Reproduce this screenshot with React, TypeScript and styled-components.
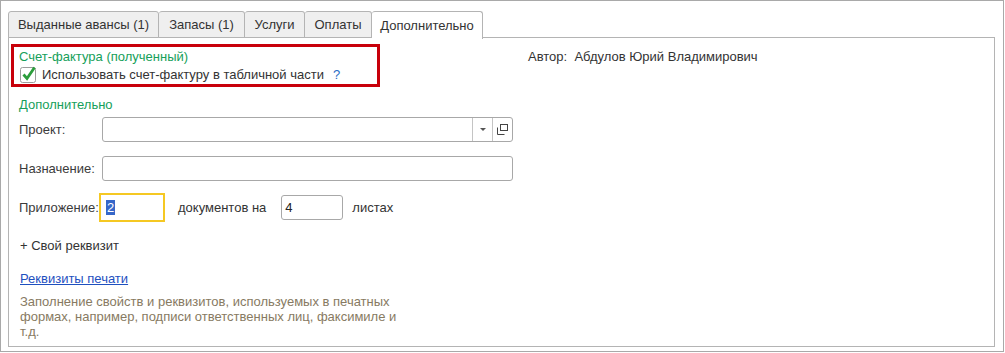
import React from "react";
import styled, { createGlobalStyle } from "styled-components";

const Global = createGlobalStyle`
  html, body { margin: 0; padding: 0; background: #fff; }
  body { font-family: Arial, "Liberation Sans", sans-serif; font-size: 13px; color: #3b3b3b; }
  * { box-sizing: border-box; }
`;

const Frame = styled.div`
  width: 1004px;
  height: 352px;
  border: 1px solid #a9a9a9;
  padding: 10px 8px 4px 7px;
  display: flex;
  flex-direction: column;
`;

const TabBar = styled.div`
  display: flex;
  height: 27px;
  position: relative;
  z-index: 1;
`;

const Tab = styled.div<{ $active?: boolean; $w: number; $first?: boolean }>`
  width: ${(p) => p.$w}px;
  height: ${(p) => (p.$active ? 28 : 27)}px;
  border: 1px solid #b4b4b4;
  border-left-width: ${(p) => (p.$first ? 1 : 0)}px;
  border-bottom: ${(p) => (p.$active ? "none" : "1px solid #b4b4b4")};
  border-radius: 3px 3px 0 0;
  background: ${(p) => (p.$active ? "#fff" : "#efefef")};
  display: flex;
  align-items: center;
  justify-content: center;
  color: #333;
  font-size: 13px;
  white-space: nowrap;
`;

const Panel = styled.div`
  flex: 1;
  border: 1px solid #b4b4b4;
  margin-top: -1px;
  display: flex;
  padding: 6px 0 0 2px;
`;

const LeftCol = styled.div`
  width: 504px;
  display: flex;
  flex-direction: column;
`;

const RightCol = styled.div`
  padding-left: 13px;
  padding-top: 5px;
  line-height: 16px;
  color: #333;
`;

const RedBox = styled.div`
  width: 369px;
  height: 43px;
  border: 3px solid #c8000a;
  padding: 2px 0 0 5px;
`;

const GroupTitle = styled.div<{ $mt?: number; $pl?: number }>`
  color: #16a05a;
  line-height: 16px;
  margin-top: ${(p) => p.$mt ?? 0}px;
  padding-left: ${(p) => p.$pl ?? 0}px;
  font-size: 13px;
`;

const CheckRow = styled.div`
  display: flex;
  align-items: center;
  height: 18px;
  gap: 5px;
  padding-left: 1px;
`;

const CheckText = styled.span`
  color: #333;
`;

const Help = styled.span`
  color: #2b6dc5;
  margin-left: 4px;
`;

const Row = styled.div<{ $mt: number; $h: number }>`
  display: flex;
  align-items: center;
  height: ${(p) => p.$h}px;
  margin-top: ${(p) => p.$mt}px;
  padding-left: 8px;
`;

const Label = styled.div<{ $w: number }>`
  width: ${(p) => p.$w}px;
  color: #3b3b3b;
  white-space: nowrap;
`;

const Field = styled.div<{ $w: number; $h: number; $ml?: number }>`
  width: ${(p) => p.$w}px;
  height: ${(p) => p.$h}px;
  margin-left: ${(p) => p.$ml ?? 0}px;
  border: 1px solid #a8a8a8;
  border-radius: 3px;
  background: #fff;
  display: flex;
  align-items: stretch;
`;

const FieldText = styled.div`
  flex: 1;
  display: flex;
  align-items: center;
  padding-left: 3px;
  color: #222;
`;

const FieldBtn = styled.div`
  width: 20px;
  border-left: 1px solid #c4c4c4;
  display: flex;
  align-items: center;
  justify-content: center;
`;

const FocusField = styled.div`
  width: 66px;
  height: 29px;
  border: 2px solid #f5c823;
  display: flex;
  align-items: center;
  padding-left: 5px;
`;

const Selected = styled.span`
  background: #3667c9;
  color: #fff;
  line-height: 15px;
  padding: 0 1px;
`;

const Inline = styled.span<{ $ml: number }>`
  margin-left: ${(p) => p.$ml}px;
  color: #333;
  white-space: nowrap;
`;

const PlainLine = styled.div<{ $mt: number }>`
  margin-top: ${(p) => p.$mt}px;
  padding-left: 9px;
  line-height: 16px;
  color: #333;
`;

const Link = styled.a`
  display: block;
  margin-top: 17px;
  margin-left: 9px;
  line-height: 16px;
  color: #1e50bf;
  text-decoration: underline;
  width: fit-content;
`;

const Desc = styled.div`
  margin-top: 7px;
  padding-left: 9px;
  width: 396px;
  color: #877a62;
  font-size: 13px;
  line-height: 15.2px;
`;

const CheckBox = () => (
  <svg width="17" height="17" viewBox="0 0 17 17">
    <rect x="0.5" y="1.5" width="15" height="15" rx="2" fill="#fff" stroke="#9c9c9c" />
    <path d="M3.5 8.5 L7 12.5 L14.5 1.5" fill="none" stroke="#2c9d3c" strokeWidth="2.8" />
  </svg>
);

const tabs = [
  { t: "Выданные авансы (1)", w: 151 },
  { t: "Запасы (1)", w: 86 },
  { t: "Услуги", w: 60 },
  { t: "Оплаты", w: 67 },
  { t: "Дополнительно", w: 111, active: true },
];

export default function App() {
  return (
    <>
      <Global />
      <Frame>
        <TabBar>
          {tabs.map((t, i) => (
            <Tab key={t.t} $w={t.w} $active={t.active} $first={i === 0}>
              {t.t}
            </Tab>
          ))}
        </TabBar>
        <Panel>
          <LeftCol>
            <RedBox>
              <GroupTitle>Счет-фактура (полученный)</GroupTitle>
              <CheckRow>
                <CheckBox />
                <CheckText>Использовать счет-фактуру в табличной части</CheckText>
                <Help>?</Help>
              </CheckRow>
            </RedBox>
            <GroupTitle $mt={10} $pl={8}>Дополнительно</GroupTitle>
            <Row $mt={4} $h={25}>
              <Label $w={83}>Проект:</Label>
              <Field $w={411} $h={25}>
                <FieldText />
                <FieldBtn>
                  <svg width="8" height="5" viewBox="0 0 8 5">
                    <path d="M1 1 H7 L4 4 Z" fill="#555" />
                  </svg>
                </FieldBtn>
                <FieldBtn>
                  <svg width="11" height="11" viewBox="0 0 11 11">
                    <rect x="3.5" y="0.5" width="7" height="6" fill="none" stroke="#444" />
                    <path d="M0.5 3.5 V10.5 H7.5" fill="none" stroke="#444" />
                  </svg>
                </FieldBtn>
              </Field>
            </Row>
            <Row $mt={14} $h={25}>
              <Label $w={83}>Назначение:</Label>
              <Field $w={411} $h={25} />
            </Row>
            <Row $mt={12} $h={29}>
              <Label $w={80}>Приложение:</Label>
              <FocusField>
                <Selected>2</Selected>
              </FocusField>
              <Inline $ml={13}>документов на</Inline>
              <Field $w={62} $h={25} $ml={15}>
                <FieldText>4</FieldText>
              </Field>
              <Inline $ml={9}>листах</Inline>
            </Row>
            <PlainLine $mt={16}>+ Свой реквизит</PlainLine>
            <Link href="#">Реквизиты печати</Link>
            <Desc>
              Заполнение свойств и реквизитов, используемых в печатных формах, например, подписи ответственных лиц, факсимиле и т.д.
            </Desc>
          </LeftCol>
          <RightCol>Автор:&nbsp; Абдулов Юрий Владимирович</RightCol>
        </Panel>
      </Frame>
    </>
  );
}
